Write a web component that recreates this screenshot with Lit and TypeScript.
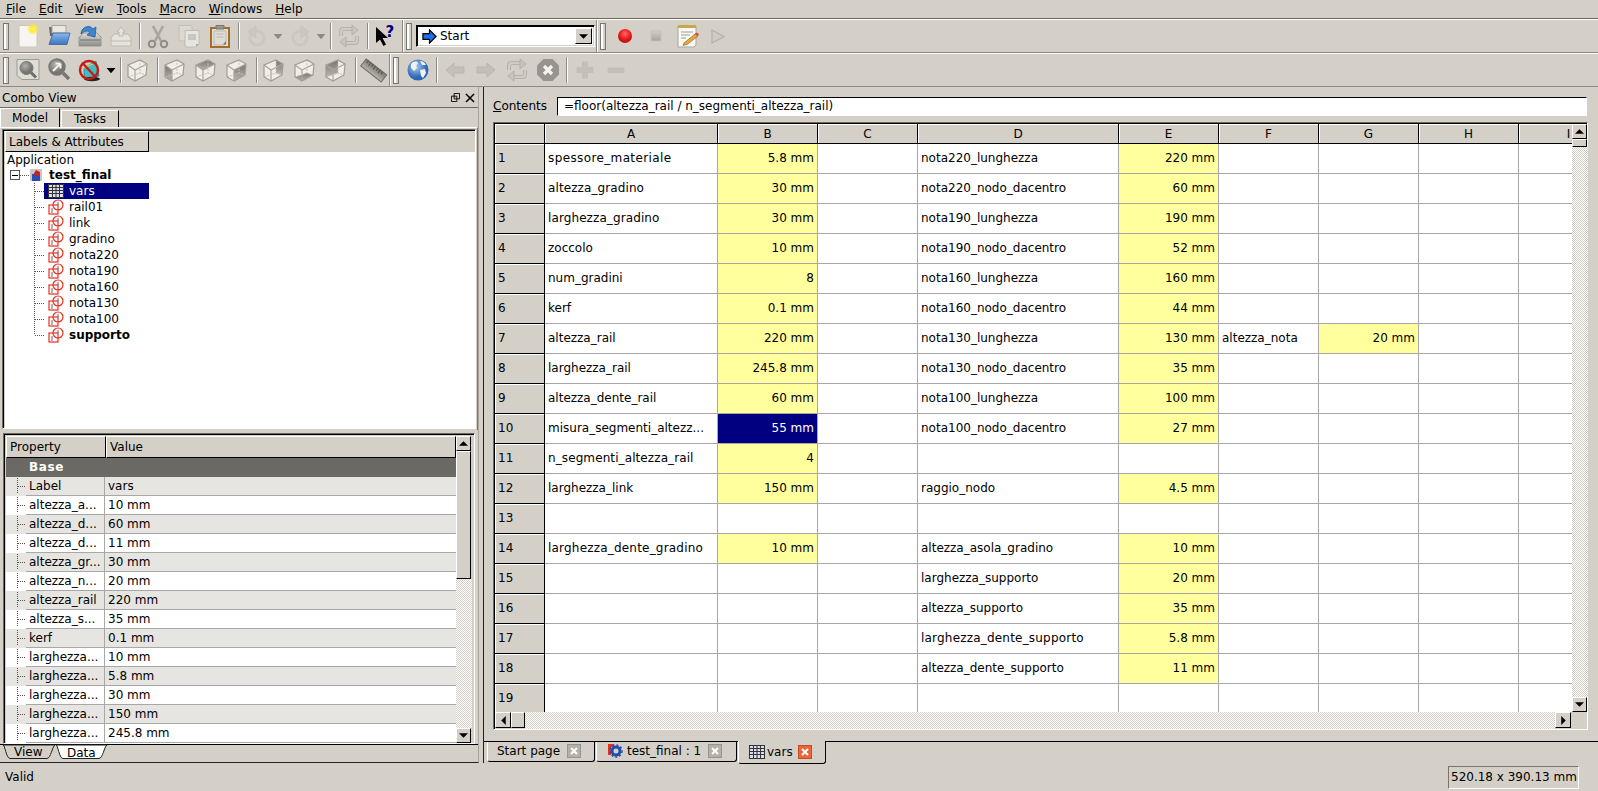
import { LitElement, html, css, svg } from "lit";
import { customElement } from "lit/decorators.js";

const cube = (face: string) => {
  const P: Record<string, string> = {
    front: "3,7 10,12 10,23 3,19",
    right: "10,12 22,6 21,17 10,23",
    top: "3,7 15,2 22,6 10,12",
    rear: "15,2 22,6 21,17 15,15",
    bottom: "3,19 15,15 21,17 10,23",
    left: "3,7 15,2 15,15 3,19",
  };
  return svg`<g transform="translate(-2 0)"><polygon points="3,7 15,2 22,6 21,17 10,23 3,19" fill="#f1eee8"/>
  ${face ? svg`<polygon points=${P[face]} fill="url(#gs)"/>` : ""}
  <path d="M3 7 10 12 22 6M10 12V23" fill="none" stroke="#a9a69e" stroke-width="1.2"/>
  <path d="M15 2V15M3 19 15 15 21 17" fill="none" stroke="#c4c1b9" stroke-width="1" stroke-dasharray="2 1"/>
  <polygon points="3,7 15,2 22,6 21,17 10,23 3,19" fill="none" stroke="#a09d95" stroke-width="1.2"/></g>`;
};

const loop = svg`<path d="M4 12V8Q4 5 7 5H15M20 12V16Q20 19 17 19H9" fill="none" stroke="#aeaba3" stroke-width="4"/><path d="M4 12V8Q4 5 7 5H15M20 12V16Q20 19 17 19H9" fill="none" stroke="#cfccc4" stroke-width="2.4"/><path d="M15 1 21 6 15 11ZM9 13 3 18 9 23Z" fill="#c8c5bd" stroke="#aeaba3" stroke-width=".8"/>`;

const ICONS: Record<string, unknown> = {
  new: svg`<path d="M3 1.5H21V23H3Z" fill="#f6f5f1" stroke="#c9c6bd"/><circle cx="17" cy="5" r="6" fill="url(#gy)"/>`,
  open: svg`<path d="M2 3H7L8 5H19V12H3Z" fill="#6d6c68"/><path d="M5 1.5H19V9H5Z" fill="#e9e7e2" stroke="#a8a59e"/><path d="M6 9H23L20 20.5H2Z" fill="url(#gb)" stroke="#3b5f92" stroke-width=".8"/>`,
  save: svg`<path d="M2 13 5 9H19L23 13V22H1V13Z" fill="url(#gd)" stroke="#8b8a86" stroke-width=".8"/><path d="M2 16H22" stroke="#6e6e6a"/><path d="M3 10C3 3 12 0 15 5L18 3 17 13 9 11 12 8.500C10 6 6 7 3 10Z" fill="#3f86cf" stroke="#1f5a9c" stroke-width=".8"/>`,
  saveas: svg`<path d="M2 14 5 10H19L22 14V22H2Z" fill="#e6e3dc" stroke="#bcb9b0"/><path d="M2 17H22" stroke="#bcb9b0"/><path d="M12 3 16 8H14V12H10V8H8Z" fill="#e6e3dc" stroke="#bcb9b0"/>`,
  cut: svg`<path d="M7 2 15 17M17 2 9 17" stroke="#a9a69e" stroke-width="2.6" fill="none"/><circle cx="6" cy="20" r="3.2" fill="none" stroke="#8f8c85" stroke-width="2"/><circle cx="18" cy="20" r="3.2" fill="none" stroke="#8f8c85" stroke-width="2"/>`,
  copy: svg`<path d="M2 1.5H15V17H2Z" fill="#dbd9d3" stroke="#c2bfb7"/><path d="M8 6.5H22V20L19 23H8Z" fill="#e7e5e0" stroke="#bdbab2"/><path d="M11 10H19V16H11Z" fill="#c9c7c1"/><path d="M19 23V20H22Z" fill="#b0ada6"/>`,
  paste: svg`<path d="M3 4H21V23H3Z" fill="#e2dfd8" stroke="#a36e2a" stroke-width="2"/><path d="M6 7H18V20L15.5 21H6Z" fill="#dedcd6" stroke="#bdbab2"/><path d="M8 1.5H16V5H8Z" fill="#9a978f" stroke="#77756f"/><path d="M8.5 10H15.500M8.500 13H15.500" stroke="#bbb8b0"/><path d="M15 20.500 18 17V20.500Z" fill="#777"/>`,
  undo: svg`<circle cx="12" cy="14" r="7" fill="none" stroke="#cbc8c0" stroke-width="3"/><path d="M3 8 11 2V14Z" fill="#cbc8c0" stroke="#c3c0b8" stroke-width=".6"/>`,
  redo: svg`<circle cx="12" cy="14" r="7" fill="none" stroke="#cbc8c0" stroke-width="3"/><path d="M21 8 13 2V14Z" fill="#cbc8c0" stroke="#c3c0b8" stroke-width=".6"/>`,
  refresh: loop,
  what: svg`<path d="M2 3V19L6 15.500 9.500 22 12 20.500 8.500 14H14Z" fill="#000"/><text x="11.500" y="13" class="q">?</text>`,
  fit: svg`<path d="M1 1.500H23V21.500H6L1 17.500Z" fill="#dfddd6" stroke="#9d9a92"/><circle cx="10.500" cy="10" r="6.500" fill="url(#gm)" stroke="#777"/><path d="M15 14.500 20 19.500" stroke="#6e6d69" stroke-width="3"/>`,
  fitsel: svg`<circle cx="10" cy="9" r="8" fill="url(#gm)" stroke="#777" stroke-width="1.500"/><path d="M16 15 22 21" stroke="#77756f" stroke-width="3.600"/><path d="M6 13 10 9M13.500 5.500H8.500M13.500 5.500V10.500M13 6 7 12" stroke="#f3f2ee" stroke-width="2" fill="none"/>`,
  nodraw: svg`<path d="M6 10 18 3 21 18 12 22 6 18Z" fill="#3fbcc4" stroke="#1f6b70" stroke-width=".6"/><path d="M6 10 17 5" stroke="#e9e14c" stroke-width="1"/><ellipse cx="14" cy="21" rx="8" ry="2.200" fill="#222"/><circle cx="11" cy="12" r="9" fill="none" stroke="#c41c14" stroke-width="2.400"/><path d="M5 5.500 17 18.500" stroke="#c41c14" stroke-width="2.400"/>`,
  iso: cube(""), front: cube("front"), top: cube("top"), right: cube("right"), rear: cube("rear"), bottom: cube("bottom"), left: cube("left"),
  measure: svg`<g transform="rotate(38 12 12)"><rect x="-1" y="8" width="26" height="9" fill="url(#gs)" stroke="#6f6e69"/><path d="M2 8V11M5 8V12M8 8V11M11 8V12M14 8V11M17 8V12M20 8V11" stroke="#55544f"/></g>`,
  globe: svg`<circle cx="12" cy="12" r="10.500" fill="url(#gg)"/><path d="M5 6C8 3 11 3 12 5L10 8 11 10 8 13 5 10ZM14 12 19 11 20 15 17 20 15 18ZM14 3C17 3 19 5 20 7L16 7Z" fill="#eef3f8"/>`,
  back: svg`<path d="M3 12 11 5V9H21V15H11V19Z" fill="#c3c0b8" stroke="#bab7af"/>`,
  forward: svg`<path d="M21 12 13 5V9H3V15H13V19Z" fill="#c3c0b8" stroke="#bab7af"/>`,
  stop: svg`<path d="M7.500 1H16.500L23 7.500V16.500L16.500 23H7.500L1 16.500V7.500Z" fill="#97948d"/><path d="M8 8 16 16M16 8 8 16" stroke="#f4f3f0" stroke-width="3.200"/>`,
  plus: svg`<path d="M9.500 4H14.500V9.500H20V14.500H14.500V20H9.500V14.500H4V9.500H9.500Z" fill="#c3c0b8" stroke="#bcb9b1" stroke-width=".6"/>`,
  minus: svg`<rect x="4" y="10" width="16" height="4.500" fill="#c3c0b8" stroke="#bcb9b1" stroke-width=".6"/>`,
  record: svg`<circle cx="12" cy="12" r="7" fill="url(#gr)"/>`,
  halt: svg`<rect x="7" y="7" width="10" height="10" fill="url(#gh)" stroke="#c4c1b9"/>`,
  edit: svg`<path d="M3 2H21V21L19 23H3Z" fill="#faf9f5" stroke="#a9a69e"/><path d="M3 1H21V4H3Z" fill="#c6a94e"/><path d="M6 8H18M6 11H15M6 14H11" stroke="#9d9b95"/><path d="M9 19 20 10 23 12 12 20.500 8 21.500Z" fill="#e9a73c" stroke="#7a5a20" stroke-width=".6"/><path d="M20 10 23 12 24 10 21.500 8.500Z" fill="#d84a3a"/>`,
  play: svg`<path d="M6 6 18 12.500 6 19Z" fill="#cfccc4" stroke="#b4b1a9" stroke-width="1.200"/>`,
};

const icon = (n: string) => html`<svg class="ic" viewBox="0 0 24 24">${ICONS[n]}</svg>`;
const tb = (n: string) => html`<span class="tb">${icon(n)}</span>`;
const sep = html`<span class="sep"></span>`;
const grip = html`<span class="grip"></span>`;
const drop = (dark = false) => html`<span class="drop ${dark ? "dk" : ""}"></span>`;

const sheetIcon = (cls: string) => html`<svg class=${cls} viewBox="0 0 16 16"><rect x=".5" y="1.500" width="15" height="13" fill="#dcdcf0" stroke="#333"/><path d="M.5 4.500H15.500M.5 7.500H15.500M.5 10.500H15.500M4.500 1.500V14.500M8 1.500V14.500M11.500 1.500V14.500" stroke="#333"/></svg>`;
const partIcon = html`<svg class="ti" viewBox="0 0 16 16"><rect x="1" y="6" width="9" height="9" fill="none" stroke="#e8301c" stroke-width="1.200"/><circle cx="10" cy="6" r="5" fill="none" stroke="#e8301c" stroke-width="1.200"/><path d="M4 14V9M10 6V3" stroke="#666"/></svg>`;
const closeBtn = (on = false, m = 7) => html`<span class="close ${on ? "on" : ""}" style="margin-left:${m}px"><svg viewBox="0 0 8 8"><path d="M1 1 7 7M7 1 1 7" stroke="#fff" stroke-width="2"/></svg></span>`;
const branch = (last: boolean, w: number) => html`<svg class="br" style="width:${w}px" viewBox="0 0 ${w} 16"><path d="M.5 0V${last ? 8 : 16}M1 8.500H${w}" stroke="#555" stroke-dasharray="1 1" fill="none"/></svg>`;
const arrow = (d: string) => html`<svg class="arr" viewBox="0 0 8 8"><path d=${d} fill="#000"/></svg>`;
const UP = "M0 6 4 2 8 6Z", DOWN = "M0 2H8L4 6Z", LEFT = "M6 0V8L2 4Z", RIGHT = "M2 0V8L6 4Z";

const COLS: [string, number][] = [["A", 173], ["B", 100], ["C", 100], ["D", 201], ["E", 100], ["F", 100], ["G", 100], ["H", 100], ["I", 100]];
type Row = [string, string, string, string];
const ROWS: Row[] = [
  ["spessore_materiale", "5.8 mm", "nota220_lunghezza", "220 mm"],
  ["altezza_gradino", "30 mm", "nota220_nodo_dacentro", "60 mm"],
  ["larghezza_gradino", "30 mm", "nota190_lunghezza", "190 mm"],
  ["zoccolo", "10 mm", "nota190_nodo_dacentro", "52 mm"],
  ["num_gradini", "8", "nota160_lunghezza", "160 mm"],
  ["kerf", "0.1 mm", "nota160_nodo_dacentro", "44 mm"],
  ["altezza_rail", "220 mm", "nota130_lunghezza", "130 mm"],
  ["larghezza_rail", "245.8 mm", "nota130_nodo_dacentro", "35 mm"],
  ["altezza_dente_rail", "60 mm", "nota100_lunghezza", "100 mm"],
  ["misura_segmenti_altezz...", "55 mm", "nota100_nodo_dacentro", "27 mm"],
  ["n_segmenti_altezza_rail", "4", "", ""],
  ["larghezza_link", "150 mm", "raggio_nodo", "4.5 mm"],
  ["", "", "", ""],
  ["larghezza_dente_gradino", "10 mm", "altezza_asola_gradino", "10 mm"],
  ["", "", "larghezza_supporto", "20 mm"],
  ["", "", "altezza_supporto", "35 mm"],
  ["", "", "larghezza_dente_supporto", "5.8 mm"],
  ["", "", "altezza_dente_supporto", "11 mm"],
  ["", "", "", ""],
];
const SPACING: Record<string, number> = { spessore_materiale: 0.38, larghezza_dente_supporto: 0.2, larghezza_dente_gradino: 0.2, larghezza_gradino: 0.1, altezza_gradino: 0.1, n_segmenti_altezza_rail: 0.1 };
const cellText = (t: string) => html`<span style=${SPACING[t] ? `letter-spacing:${SPACING[t]}px` : ""}>${t}</span>`;
const PROPS = [["Label", "vars"], ["altezza_a...", "10 mm"], ["altezza_d...", "60 mm"], ["altezza_d...", "11 mm"], ["altezza_gr...", "30 mm"], ["altezza_n...", "20 mm"], ["altezza_rail", "220 mm"], ["altezza_s...", "35 mm"], ["kerf", "0.1 mm"], ["larghezza...", "10 mm"], ["larghezza...", "5.8 mm"], ["larghezza...", "30 mm"], ["larghezza...", "150 mm"], ["larghezza...", "245.8 mm"]];
const TREE = ["rail01", "link", "gradino", "nota220", "nota190", "nota160", "nota130", "nota100", "supporto"];
const MENU: [string, string][] = [["F", "ile"], ["E", "dit"], ["V", "iew"], ["T", "ools"], ["M", "acro"], ["W", "indows"], ["H", "elp"]];

@customElement("app-root")
export class AppRoot extends LitElement {
  static styles = css`
    :host { display: block; width: 1598px; height: 791px; overflow: hidden; background: #d4d0c8; color: #000; font: 12px/16px "DejaVu Sans", sans-serif; }
    * { box-sizing: border-box; }
    .defs { width: 0; height: 0; display: block; }
    .page { display: flex; flex-direction: column; height: 791px; }
    .menu { height: 19px; display: flex; padding: 0 0 0 6px; gap: 13px; align-items: center; border-bottom: 1px solid #6b6963; }
    .menu u { text-decoration: underline; }
    .trow { height: 34px; display: flex; border-top: 1px solid #fff; border-bottom: 1px solid #8d8a83; }
    .bar { display: flex; align-items: center; padding-left: 3px; border-right: 1px solid #8d8a83; box-shadow: 1px 0 0 #fff; }
    .bar.end { border-right: 0; box-shadow: none; flex: 1; }
    .grip { width: 6px; height: 27px; margin-right: 3px; border: 1px solid #77756f; background: linear-gradient(90deg, #fff 0 2px, #d4d0c8 2px); flex: none; }
    .tb { width: 31px; height: 30px; display: flex; align-items: center; justify-content: center; flex: none; }
    .ic { width: 24px; height: 24px; display: block; overflow: visible; }
    .q { font: bold 15px "DejaVu Sans", sans-serif; fill: #000080; }
    .sep { width: 6px; height: 26px; flex: none; margin: 0; background: linear-gradient(90deg, transparent 0 3px, #8d8a83 3px 4px, #fff 4px 5px, transparent 5px); }
    .drop { width: 12px; flex: none; height: 7px; background: #8d8a83; clip-path: polygon(0 0, 100% 0, 50% 100%); transform: scale(.75); }
    .drop.dk { background: #000; transform: scale(.78); }
    .combo { margin-left: 1px; width: 179px; height: 22px; display: flex; align-items: center; background: #fff; border: 1px solid; border-color: #000 #fff #fff #000; box-shadow: inset 1px 1px 0 #000, inset -1px -1px 0 #d4d0c8; padding: 0 2px 0 5px; gap: 3px; }
    .combo > span { flex: 1; }
    .combo svg.a { width: 15px; height: 15px; }
    .cbtn { width: 17px; height: 16px; background: #d4d0c8; border: 1px solid; border-color: #fff #000 #000 #fff; display: flex; align-items: center; justify-content: center; }
    .arr { width: 9px; height: 9px; display: block; }
    .main { flex: 1; display: flex; min-height: 0; }
    .left { width: 479px; display: flex; flex-direction: column; border-right: 1px solid #aaa69e; border-bottom: 1px solid #222; height: 676px; flex: none; }
    .title { height: 21px; flex: none; padding: 1px 3px 0 2px; display: flex; align-items: center; border-bottom: 1px solid #6b6963; }
    .title span { flex: 1; }
    .title svg { width: 10px; height: 10px; margin-left: 5px; }
    .title svg.fl { width: 9px; height: 9px; }
    .ctabs { height: 19px; flex: none; display: flex; align-items: flex-end; }
    .ctab { text-align: center; border: 1px solid; border-color: #fff #000 transparent #fff; border-bottom: 0; height: 17px; }
    .ctab.on { height: 19px; width: 60px; padding-top: 1px; }
    .ctab.off { width: 58px; margin-left: 1px; }
    .pane { height: 303px; flex: none; padding: 1px 1px 1px 2px; border-top: 1px solid #fff; border-right: 1px solid #77756f; }
    .sunk { border: 1px solid; border-color: #6b6963 #fff #fff #6b6963; box-shadow: inset 1px 1px 0 #000; }
    .tree { height: 100%; padding: 1px 0 0 2px; display: flex; flex-direction: column; }
    .thead { height: 21px; flex: none; display: flex; }
    .hd { height: 100%; background: #d4d0c8; border: 1px solid; border-color: #fff #000 #000 #fff; padding-left: 3px; display: flex; align-items: center; flex: none; }
    .tbody { flex: 1; background: #fff; overflow: hidden; }
    .trw { height: 16px; display: flex; align-items: center; white-space: nowrap; }
    .trw.appl { padding-left: 2px; height: 15px; }
    .trw.doc { padding-left: 5px; font-weight: bold; }
    .xbox { width: 10px; height: 10px; border: 1px solid #555; background: linear-gradient(#000,#000) center/6px 1px no-repeat #fff; flex: none; }
    .dots { width: 9px; height: 1px; border-top: 1px dotted #555; flex: none; }
    .doc svg { width: 14px; height: 14px; margin-right: 6px; }
    .kid { padding-left: 29px; }
    .br { height: 16px; flex: none; display: block; }
    .item { width: 105px; height: 16px; display: flex; align-items: center; padding-left: 4px; gap: 4px; }
    .item.sel { background: #000080; color: #fff; }
    .ti { width: 16px; height: 16px; flex: none; display: block; }
    .b { font-weight: bold; }
    .gap { height: 3px; flex: none; }
    .props { height: 311px; flex: none; margin: 0 3px; padding: 2px 1px 0 2px; display: flex; width: 472px; }
    .ptable { width: 450px; flex: none; overflow: hidden; }
    .phead { display: flex; height: 22px; }
    .phead .hd:first-child { width: 100px; }
    .phead .hd:last-child { width: 350px; }
    .baser { height: 19px; background: #6b6963; color: #fff; font-weight: bold; padding: 1px 0 0 23px; letter-spacing: .6px; }
    .prow { height: 19px; display: flex; background: #fff; }
    .prow.alt { background: #e7e5e1; }
    .pind { width: 20px; height: 19px; flex: none; padding-left: 11px; }
    .pind .br { height: 18px; }
    .pk, .pv { border-bottom: 1px solid #a8a8a8; height: 19px; white-space: nowrap; display: flex; align-items: center; }
    .pk { width: 79px; padding-left: 3px; border-right: 1px solid #a8a8a8; flex: none; }
    .pv { flex: 1; padding-left: 3px; }
    .vsb { width: 16px; flex: none; display: flex; flex-direction: column; }
    .sbtn { background: #d4d0c8; border: 1px solid; border-color: #fff #000 #000 #fff; display: flex; align-items: center; justify-content: center; flex: none; }
    .vsb .sbtn { height: 15px; width: 15px; }
    .hatch { flex: 1; background: repeating-conic-gradient(#d4d0c8 0 25%, #fff 0 50%) 0 0 / 2px 2px; }
    .vsb .vthumb { height: 128px; }
    .btabs { height: 16px; flex: none; display: block; width: 478px; }
    .btabs text { font: 12px "DejaVu Sans", sans-serif; }
    .split { width: 4px; flex: none; }
    .right { flex: 1; border-left: 1px solid #222; display: flex; flex-direction: column; min-width: 0; height: 676px; }
    .cts { height: 36px; flex: none; display: flex; align-items: center; padding: 2px 10px 0 9px; gap: 10px; }
    .cts u { text-decoration: underline; }
    .input { width: 1030px; height: 19px; background: #fff; border: 1px solid; border-color: #000 #fff #fff #000; padding-left: 6px; display: flex; align-items: center; }
    .sheet { margin: -1px 0 0 9px; width: 1095px; height: 608px; flex: none; border: 1px solid; border-color: #6b6963 #fff #fff #6b6963; box-shadow: inset 1px 1px 0 #000; padding: 1px 0 0 1px; display: flex; flex-direction: column; }
    .sup { height: 588px; display: flex; flex: none; }
    .sclip { width: 1077px; overflow: hidden; flex: none; }
    .sgrid { display: grid; grid-template-rows: 20px repeat(19, 30px); width: 1200px; }
    .ch { background: #d4d0c8; border-right: 1px solid #000; border-bottom: 1px solid #000; box-shadow: inset 1px 0 0 #fff, inset 0 1px 0 #fff; display: flex; align-items: center; justify-content: center; padding-top: 1px; }
    .rh { background: #d4d0c8; border-right: 1px solid #000; border-bottom: 1px solid #000; box-shadow: inset 1px 1px 0 #fff; display: flex; align-items: center; padding: 0 0 2px 3px; }
    .c { border-right: 1px solid #a8a8a8; border-bottom: 1px solid #a8a8a8; background: #fff; display: flex; align-items: center; padding: 0 3px 2px 3px; white-space: nowrap; overflow: hidden; }
    .c.v { justify-content: flex-end; background: #ffff9e; }
    .c.s { background: #000080; color: #fff; justify-content: flex-end; }
    .sheet .vsb { height: 588px; }
    .sheet .vsb .vthumb { height: 8px; }
    .shb { height: 17px; display: flex; flex: none; }
    .shb .sbtn { width: 16px; height: 16px; }
    .shb .hthumb { width: 14px; }
    .corner { width: 16px; flex: none; }
    .dtabs { height: 24px; margin-top: 11px; flex: none; display: flex; border-top: 1px solid #000; padding-left: 3px; }
    .dtab { height: 20px; display: flex; align-items: center; border: 1px solid; border-color: transparent #000 #000 #fff; border-top: 0; border-radius: 0 0 3px 3px; background: #d4d0c8; white-space: nowrap; flex: none; padding-bottom: 2px; }
    .dtab.on { height: 23px; margin-top: -1px; border-right: 1px solid #000; padding-bottom: 0; }
    .close { width: 14px; height: 14px; background: #b4b1a9; border: 1px solid #98958e; display: flex; align-items: center; justify-content: center; flex: none; }
    .close.on { background: #e8663c; border-color: #c94b26; }
    .close svg { width: 8px; height: 8px; }
    .status { height: 28px; flex: none; display: flex; align-items: center; padding: 0 0 0 5px; }
    .status > span:first-child { flex: 1; }
    .sbox { width: 131px; height: 23px; border: 1px solid; border-color: #77756f #fff #fff #77756f; padding-left: 2px; display: flex; align-items: center; margin-right: 19px; white-space: nowrap; }
  `;

  render() {
    return html`
      <svg class="defs"><defs>
        <radialGradient id="gy"><stop offset="0" stop-color="#fff27a"/><stop offset=".5" stop-color="#ffe93a"/><stop offset="1" stop-color="#ffe93a" stop-opacity="0"/></radialGradient>
        <linearGradient id="gb" x1="0" y1="0" x2="0" y2="1"><stop offset="0" stop-color="#8ab8ea"/><stop offset="1" stop-color="#3a75c0"/></linearGradient>
        <linearGradient id="gd" x1="0" y1="0" x2="0" y2="1"><stop offset="0" stop-color="#dedddb"/><stop offset="1" stop-color="#8c8b87"/></linearGradient>
        <linearGradient id="gs" x1="0" y1="0" x2="0" y2="1"><stop offset="0" stop-color="#77756f"/><stop offset="1" stop-color="#b9b6ae"/></linearGradient>
        <radialGradient id="gm" cx=".4" cy=".35"><stop offset="0" stop-color="#b4b3ae"/><stop offset="1" stop-color="#75746f"/></radialGradient>
        <radialGradient id="gg" cx=".4" cy=".35"><stop offset="0" stop-color="#a9cdf0"/><stop offset="1" stop-color="#2f68b4"/></radialGradient>
        <radialGradient id="gr" cx=".5" cy=".35"><stop offset="0" stop-color="#ff6a6a"/><stop offset=".7" stop-color="#ee1f1f"/><stop offset="1" stop-color="#c81414"/></radialGradient>
        <linearGradient id="gh" x1="0" y1="0" x2="0" y2="1"><stop offset="0" stop-color="#d0cdc6"/><stop offset="1" stop-color="#a7a49c"/></linearGradient>
      </defs></svg>
      <div class="page">
        <div class="menu">${MENU.map(([a, b]) => html`<span><u>${a}</u>${b}</span>`)}</div>
        <div class="trow">
          <div class="bar">${grip}${tb("new")}${tb("open")}${tb("save")}${tb("saveas")}${sep}${tb("cut")}${tb("copy")}${tb("paste")}${sep}${tb("undo")}${drop()}${tb("redo")}${drop()}${sep}${tb("refresh")}${sep}${tb("what")}<span style="width:1px"></span></div>
          <div class="bar">${grip}
            <div class="combo"><svg class="a" viewBox="0 0 16 16"><path d="M1 5H8V1L15 8 8 15V11H1Z" fill="#1f6fe8" stroke="#000" stroke-width="1.300"/></svg><span>Start</span><div class="cbtn">${arrow(DOWN)}</div></div><span style="width:1px"></span></div>
          <div class="bar end">${grip}${tb("record")}${tb("halt")}${tb("edit")}${tb("play")}</div>
        </div>
        <div class="trow">
          <div class="bar">${grip}${tb("fit")}${tb("fitsel")}${tb("nodraw")}${drop(true)}${sep}${tb("iso")}${sep}${tb("front")}${tb("top")}${tb("right")}${sep}${tb("rear")}${tb("bottom")}${tb("left")}${sep}${tb("measure")}</div>
          <div class="bar end">${grip}${tb("globe")}${sep}${tb("back")}${tb("forward")}${tb("refresh")}${tb("stop")}${sep}${tb("plus")}${tb("minus")}</div>
        </div>
        <div class="main">
          <div class="left">
            <div class="title"><span>Combo View</span>
              <svg class="fl" viewBox="0 0 10 10"><path d="M3.500 .500H9.500V6.500H3.500ZM.500 3.500H6.500V9.500H.500Z" fill="#d4d0c8" stroke="#000"/></svg>
              <svg viewBox="0 0 10 10"><path d="M1 1 9 9M9 1 1 9" stroke="#000" stroke-width="1.500"/></svg></div>
            <div class="ctabs"><div class="ctab on">Model</div><div class="ctab off">Tasks</div></div>
            <div class="pane"><div class="tree sunk">
              <div class="thead"><div class="hd" style="width:144px">Labels &amp; Attributes</div></div>
              <div class="tbody">
                <div class="trw appl">Application</div>
                <div class="trw doc"><span class="xbox"></span><span class="dots"></span><svg viewBox="0 0 14 14"><rect x="1" y="1" width="12" height="12" fill="#c9c7c2"/><rect x="3" y="6" width="8" height="7" fill="#2e4cb8"/><path d="M4 7 7 2 11 4 11 8Z" fill="#c8201c"/></svg>test_final</div>
                <div class="trw kid">${branch(false, 10)}<div class="item sel">${sheetIcon("ti")}<span style="margin-left:1px">vars</span></div></div>
                ${TREE.map((t, i) => html`<div class="trw kid">${branch(i === TREE.length - 1, 10)}<div class="item">${partIcon}<span class=${t === "supporto" ? "b" : ""} style="margin-left:1px">${t}</span></div></div>`)}
              </div>
            </div></div>
            <div class="gap"></div>
            <div class="props sunk">
              <div class="ptable">
                <div class="phead"><div class="hd">Property</div><div class="hd">Value</div></div>
                <div class="baser">Base</div>
                ${PROPS.map(([k, v], i) => html`<div class="prow ${i % 2 ? "" : "alt"}"><div class="pind">${branch(false, 9)}</div><div class="pk">${k}</div><div class="pv">${v}</div></div>`)}
              </div>
              <div class="vsb"><div class="sbtn">${arrow(UP)}</div><div class="sbtn vthumb"></div><div class="hatch"></div><div class="sbtn">${arrow(DOWN)}</div></div>
            </div>
            <svg class="btabs" viewBox="0 0 478 16">
              <path d="M0 .5H478" stroke="#000"/>
              <path d="M3 1C5 1 6 14 10 14.500H47C51 14 52 3 55 1Z" fill="#d4d0c8" stroke="#222"/>
              <path d="M56 1C58 1 59 14 63 14.500H99C103 14 104 3 107 1Z" fill="#fff" stroke="#222"/>
              <text x="14" y="12">View</text><text x="67" y="13">Data</text>
            </svg>
          </div>
          <div class="split"></div>
          <div class="right">
            <div class="cts"><span><u>C</u>ontents</span><div class="input">=floor(altezza_rail / n_segmenti_altezza_rail)</div></div>
            <div class="sheet">
              <div class="sup">
                <div class="sclip"><div class="sgrid" style="grid-template-columns:50px ${COLS.map((c) => c[1] + "px").join(" ")}">
                  <div class="ch"></div>
                  ${COLS.map((c) => html`<div class="ch">${c[0]}</div>`)}
                  ${ROWS.map((r, i) => html`
                    <div class="rh">${i + 1}</div>
                    <div class="c">${cellText(r[0])}</div>
                    <div class="c ${i === 9 ? "s" : r[1] ? "v" : ""}">${r[1]}</div>
                    <div class="c"></div>
                    <div class="c">${cellText(r[2])}</div>
                    <div class="c ${r[3] ? "v" : ""}">${r[3]}</div>
                    <div class="c">${i === 6 ? "altezza_nota" : ""}</div>
                    <div class="c ${i === 6 ? "v" : ""}">${i === 6 ? "20 mm" : ""}</div>
                    <div class="c"></div><div class="c"></div>`)}
                </div></div>
                <div class="vsb"><div class="sbtn">${arrow(UP)}</div><div class="sbtn vthumb"></div><div class="hatch"></div><div class="sbtn">${arrow(DOWN)}</div></div>
              </div>
              <div class="shb"><div class="sbtn">${arrow(LEFT)}</div><div class="sbtn hthumb"></div><div class="hatch"></div><div class="sbtn">${arrow(RIGHT)}</div><div class="corner"></div></div>
            </div>
            <div class="dtabs">
              <div class="dtab" style="width:108px;padding-left:9px">Start page${closeBtn()}</div>
              <div class="dtab" style="width:141px;margin-left:1px;padding-left:10px"><svg class="ti" style="margin-right:4px" viewBox="0 0 16 16"><path d="M1 1H7V4H4V6H6V8H4V12H1Z" fill="#e8301c"/><circle cx="9" cy="8" r="4" fill="none" stroke="#1f4fb0" stroke-width="3"/><circle cx="9" cy="8" r="6" fill="none" stroke="#1f4fb0" stroke-width="1.500" stroke-dasharray="2 2"/></svg>test_final : 1${closeBtn()}</div>
              <div class="dtab on" style="width:88px;margin-left:1px;padding-left:10px">${sheetIcon("ti")}<span style="margin-left:2px">vars</span>${closeBtn(true, 5)}</div>
            </div>
          </div>
        </div>
        <div class="status"><span>Valid</span><span class="sbox">520.18 x 390.13 mm</span></div>
      </div>
    `;
  }
}
